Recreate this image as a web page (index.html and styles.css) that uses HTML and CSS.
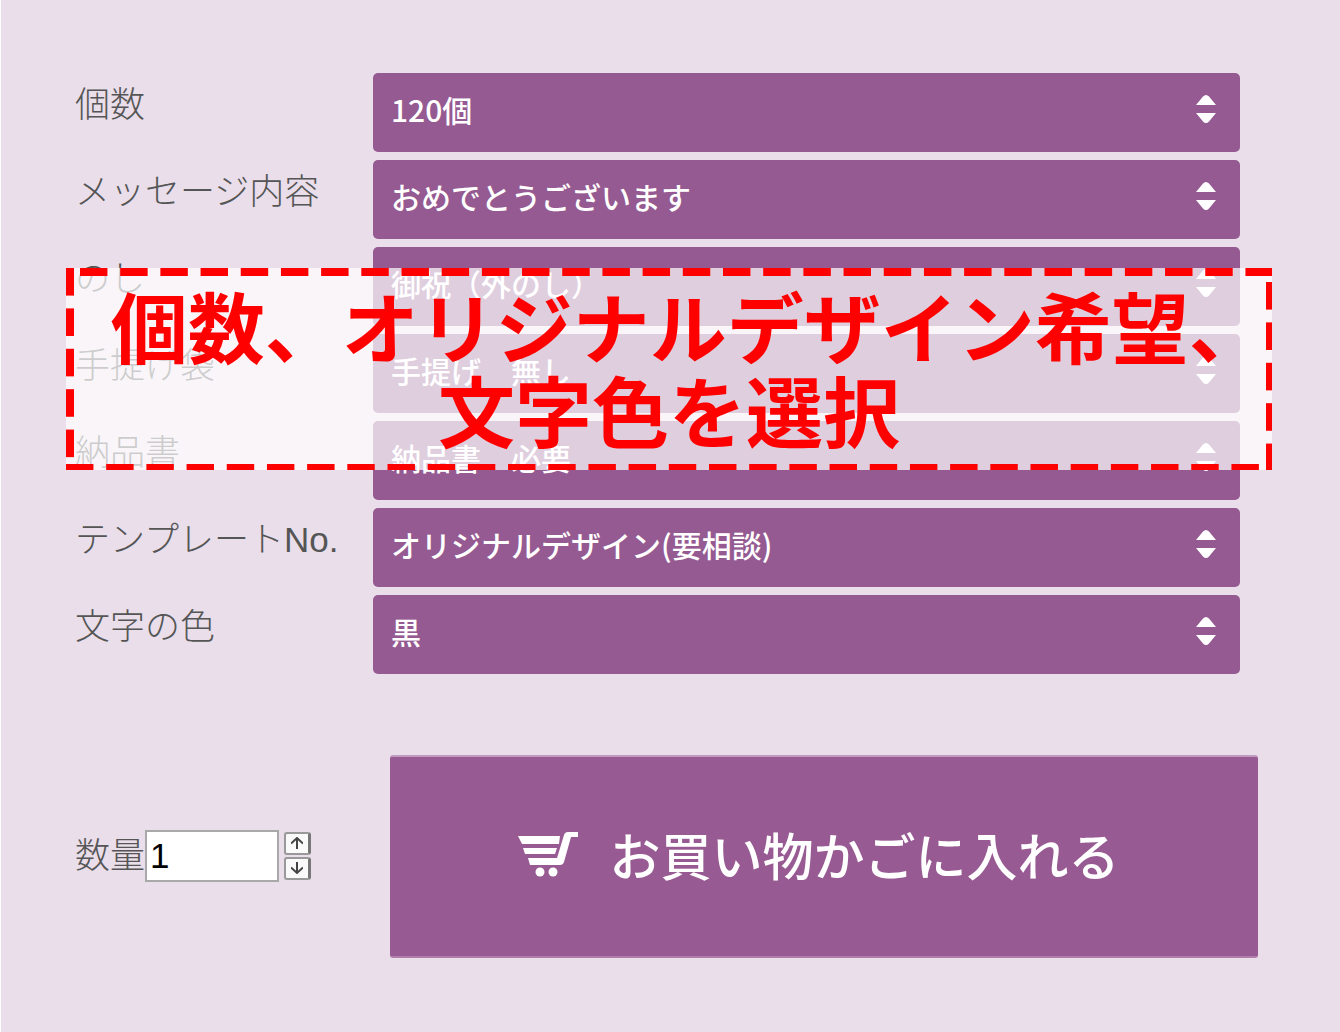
FILE: index.html
```html
<!DOCTYPE html>
<html lang="ja">
  <head>
    <meta charset="UTF-8">
    <meta name="viewport" content="width=device-width, initial-scale=1">
    <title>ご注文オプション</title>
    <link rel="stylesheet" href="styles.css">
  </head>
  <body>
    <!-- 共通アイコン -->
    <svg class="sprite" aria-hidden="true">
      <symbol id="arrows" viewBox="0 0 20 28">
        <path d="M0 10 7 1.5Q10-1.500 13 1.500L20 10ZM0 18H20L13 26.500Q10 29.500 7 26.500Z"/>
      </symbol>
    </svg>
    <main class="order">
      <form class="order-form">
        <div class="options">
          <div class="option">
            <label for="count">個数</label>
            <div class="select">
              <select id="count"><option>120個</option></select>
              <svg class="arrows"><use href="#arrows"/></svg>
            </div>
          </div>
          <div class="option">
            <label for="message">メッセージ内容</label>
            <div class="select">
              <select id="message"><option>おめでとうございます</option></select>
              <svg class="arrows"><use href="#arrows"/></svg>
            </div>
          </div>
          <div class="option">
            <label for="noshi">のし</label>
            <div class="select">
              <select id="noshi"><option>御祝（外のし）</option></select>
              <svg class="arrows"><use href="#arrows"/></svg>
            </div>
          </div>
          <div class="option">
            <label for="bag">手提げ袋</label>
            <div class="select">
              <select id="bag"><option>手提げ　無し</option></select>
              <svg class="arrows"><use href="#arrows"/></svg>
            </div>
          </div>
          <div class="option">
            <label for="slip">納品書</label>
            <div class="select">
              <select id="slip"><option>納品書　必要</option></select>
              <svg class="arrows"><use href="#arrows"/></svg>
            </div>
          </div>
          <div class="option">
            <label for="template">テンプレートNo.</label>
            <div class="select">
              <select id="template"><option>オリジナルデザイン(要相談)</option></select>
              <svg class="arrows"><use href="#arrows"/></svg>
            </div>
          </div>
          <div class="option">
            <label for="color">文字の色</label>
            <div class="select">
              <select id="color"><option>黒</option></select>
              <svg class="arrows"><use href="#arrows"/></svg>
            </div>
          </div>
        </div>
        <div class="purchase">
          <div class="quantity">
            <label for="quantity">数量</label>
            <input type="text" id="quantity" value="1" inputmode="numeric">
            <div class="stepper">
              <button type="button" aria-label="増やす">
                <svg viewBox="0 0 12 12"><path d="M6 12V1M0 6.500 6 1l6 5.500"/></svg>
              </button>
              <button type="button" aria-label="減らす">
                <svg viewBox="0 0 12 12"><path d="M6 0v11M0 5.500 6 11l6-5.500"/></svg>
              </button>
            </div>
          </div>
          <button type="submit" class="cart-button">
            <svg class="cart" viewBox="0 0 60 46">
              <path d="M0 5H42L41 13H4ZM5 17H39L37 23H7ZM10 27H39L46 4Q47 1 50 1H60V6H53L46 31Q45 34 42 34H12Z"/>
              <circle cx="22" cy="41" r="4.500"/>
              <circle cx="35" cy="41" r="4.500"/>
            </svg>
            <span>お買い物かごに入れる</span>
          </button>
        </div>
      </form>
      <!-- 操作説明 -->
      <p class="note">個数、オリジナルデザイン希望<span class="comma">、</span><br>文字色を選択</p>
    </main>
  </body>
</html>
```

FILE: styles.css
```css
* {
  box-sizing: border-box;
}

body {
  margin: 0;
  min-height: 100vh;
  font-family: "Liberation Sans", "Noto Sans CJK JP", sans-serif;
  color: #555;
  background: #e9deea;
  border-left: 1px solid #fff;
}

.sprite {
  position: absolute;
  width: 0;
  height: 0;
}

.order {
  position: relative;
  padding: 73px 82px 74px 74px;
}

/* 選択項目 */
.options {
  display: grid;
  gap: 8px;
  padding-right: 18px;
}

.option {
  display: grid;
  grid-template-columns: 298px 1fr;
}

label {
  font-size: 35px;
  font-weight: 300;
  line-height: 64px;
  white-space: nowrap;
}

.select {
  position: relative;
}

select {
  display: block;
  width: 100%;
  height: 79px;
  padding: 0 60px 7px 18px;
  font-family: "Noto Sans CJK JP", sans-serif;
  font-size: 30px;
  font-weight: 500;
  color: #fff;
  background: #955a91;
  border: 0;
  border-radius: 5px;
  appearance: none;
}

.arrows {
  position: absolute;
  top: 22px;
  right: 24px;
  width: 20px;
  height: 28px;
  fill: #fff;
  pointer-events: none;
}

/* 数量とカート */
.purchase {
  display: grid;
  grid-template-columns: 315px 1fr;
  align-items: center;
  margin-top: 81px;
}

.quantity {
  display: flex;
  align-items: center;
  padding-bottom: 2px;
}

#quantity {
  width: 134px;
  height: 52px;
  margin: 0 5px 0 0;
  padding: 0 3px;
  font-family: "Liberation Sans", sans-serif;
  font-size: 35px;
  color: #000;
  background: #fff;
  border: 2px solid #a9a9a9;
}

.stepper {
  display: grid;
  gap: 2px;
}

.stepper button {
  display: grid;
  place-items: center;
  width: 27px;
  height: 23px;
  padding: 0;
  background: #fafafa;
  border: 2px solid #999;
  border-right: 3px solid #777;
  border-radius: 3px;
}

.stepper svg {
  width: 12px;
  height: 12px;
  fill: none;
  stroke: #444;
  stroke-width: 2;
}

.cart-button {
  display: flex;
  align-items: center;
  justify-content: center;
  gap: 31px;
  height: 203px;
  padding: 0 10px 6px 0;
  font-family: "Noto Sans CJK JP", sans-serif;
  font-size: 51px;
  font-weight: 500;
  color: #fff;
  background: #975a92;
  border: 0;
  border-top: 2px solid #bf9bbd;
  border-bottom: 2px solid #b07eac;
  border-radius: 3px;
}

.cart {
  width: 60px;
  height: 46px;
  fill: #fff;
}

/* 説明の吹き出し（点線の枠） */
.note {
  position: absolute;
  top: 268px;
  left: 65px;
  right: 68px;
  margin: 0;
  padding: 15px 30px 19px;
  font-family: "Noto Sans CJK JP", sans-serif;
  font-size: 77px;
  font-weight: 700;
  line-height: 84px;
  text-align: center;
  color: #f00;
  background-color: rgba(255, 255, 255, 0.7);
  background-image:
    linear-gradient(to right, #f00 68%, transparent 68%),
    linear-gradient(to right, #f00 68%, transparent 68%),
    linear-gradient(to bottom, #f00 68%, transparent 68%),
    linear-gradient(to bottom, #f00 68%, transparent 68%);
  background-size: 40px 8px, 40px 6px, 8px 40px, 6px 40px;
  background-position: 14px 0, left bottom, left top, right 14px;
  background-repeat: round no-repeat, round no-repeat, no-repeat round, no-repeat round;
}

/* 行末の読点は半角幅 */
.comma {
  font-feature-settings: "halt";
}
```
